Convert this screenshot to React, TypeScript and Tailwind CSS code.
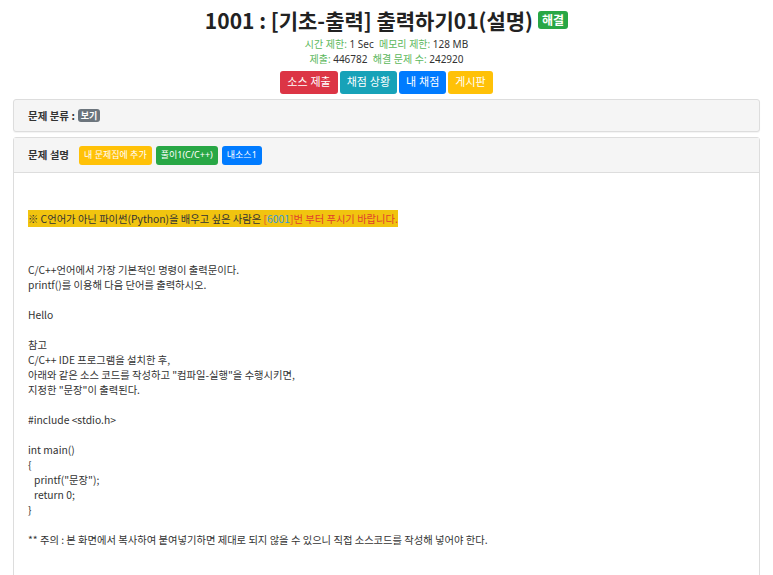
const font = { fontFamily: '"Noto Sans", "Noto Sans CJK KR", sans-serif' };
const kr = { fontFamily: '"Noto Sans CJK KR", sans-serif' };

function Btn({ color, children }: { color: string; children: React.ReactNode }) {
    return (
        <span className={`inline-flex items-center rounded-[3px] px-[7px] h-[23px] text-[11px] text-white ${color}`}>
            {children}
        </span>
    );
}

function SmallBtn({ color, children }: { color: string; children: React.ReactNode }) {
    return (
        <span className={`inline-flex items-center rounded-[3px] px-[5px] h-[19px] text-[9px] text-white ${color}`}>
            {children}
        </span>
    );
}

export default function App() {
    return (
        <div className="min-h-[575px] bg-white text-[#333]" style={font}>
            <div className="flex flex-col items-center pt-[5px]">
                <h1 className="flex items-center gap-[5px] text-[21px] leading-[30px] font-bold text-[#222]" style={kr}>
                    <span>1001 : [기초-출력] 출력하기01(설명)</span>
                    <span className="rounded-[3px] bg-[#28a745] px-[4px] text-[12px] leading-[18px] text-white">해결</span>
                </h1>
                <div className="mt-[2px] text-[10px] leading-[15px]">
                    <span className="text-[#5cb85c]">시간 제한:</span> 1 Sec&nbsp; <span className="text-[#5cb85c]">메모리 제한:</span> 128 MB
                </div>
                <div className="text-[10px] leading-[15px]">
                    <span className="text-[#5cb85c]">제출:</span> 446782&nbsp; <span className="text-[#5cb85c]">해결 문제 수:</span> 242920
                </div>
                <div className="mt-[4px] flex gap-[2px]">
                    <Btn color="bg-[#dc3545]">소스 제출</Btn>
                    <Btn color="bg-[#17a2b8]">채점 상황</Btn>
                    <Btn color="bg-[#007bff]">내 채점</Btn>
                    <Btn color="bg-[#ffc107]">게시판</Btn>
                </div>
            </div>

            <div className="mx-[13px] mt-[5px]">
                <div className="flex h-[33px] items-center rounded-[3px] border border-[#ddd] bg-[#f5f5f5] px-[14px] shadow-[0_1px_1px_rgba(0,0,0,0.05)]">
                    <span className="text-[10.5px] font-bold" style={kr}>문제 분류 :</span>
                    <span className="ml-[3px] rounded-[3px] bg-[#6c757d] px-[3px] text-[9px] leading-[13px] font-bold text-white" style={kr}>보기</span>
                </div>

                <div className="mt-[5px] rounded-t-[3px] border border-[#ddd]">
                    <div className="flex h-[35px] items-center gap-[4px] border-b border-[#ddd] bg-[#f5f5f5] px-[14px]">
                        <span className="mr-[6px] text-[10.5px] font-bold" style={kr}>문제 설명</span>
                        <SmallBtn color="bg-[#ffc107]">내 문제집에 추가</SmallBtn>
                        <SmallBtn color="bg-[#28a745]">풀이1(C/C++)</SmallBtn>
                        <SmallBtn color="bg-[#007bff]">내소스1</SmallBtn>
                    </div>
                    <div className="min-h-[420px] bg-white px-[14px] pt-[37px] text-[10.3px] leading-[15px]" style={kr}>
                        <p className="inline-block bg-[#f1c40f] leading-[17px]">
                            ※ C언어가 아닌 파이썬(Python)을 배우고 싶은 사람은 <span className="text-[#e03e2d]">[</span>
                            <span className="text-[#3598db]">6001</span>
                            <span className="text-[#e03e2d]">]번 부터 푸시기 바랍니다.</span>
                        </p>
                        <div className="mt-[35px]">
                            <p>C/C++언어에서 가장 기본적인 명령이 출력문이다.</p>
                            <p>printf()를 이용해 다음 단어를 출력하시오.</p>
                            <p>&nbsp;</p>
                            <p>Hello</p>
                            <p>&nbsp;</p>
                            <p>참고</p>
                            <p>C/C++ IDE 프로그램을 설치한 후,</p>
                            <p>아래와 같은 소스 코드를 작성하고 "컴파일-실행"을 수행시키면,</p>
                            <p>지정한 "문장"이 출력된다.</p>
                            <p>&nbsp;</p>
                            <p>#include &lt;stdio.h&gt;</p>
                            <p>&nbsp;</p>
                            <p>int main()</p>
                            <p>{'{'}</p>
                            <p className="pl-[6px]">printf("문장");</p>
                            <p className="pl-[6px]">return 0;</p>
                            <p>{'}'}</p>
                            <p>&nbsp;</p>
                            <p>** 주의 : 본 화면에서 복사하여 붙여넣기하면 제대로 되지 않을 수 있으니 직접 소스코드를 작성해 넣어야 한다.</p>
                        </div>
                    </div>
                </div>
            </div>
        </div>
    );
}
